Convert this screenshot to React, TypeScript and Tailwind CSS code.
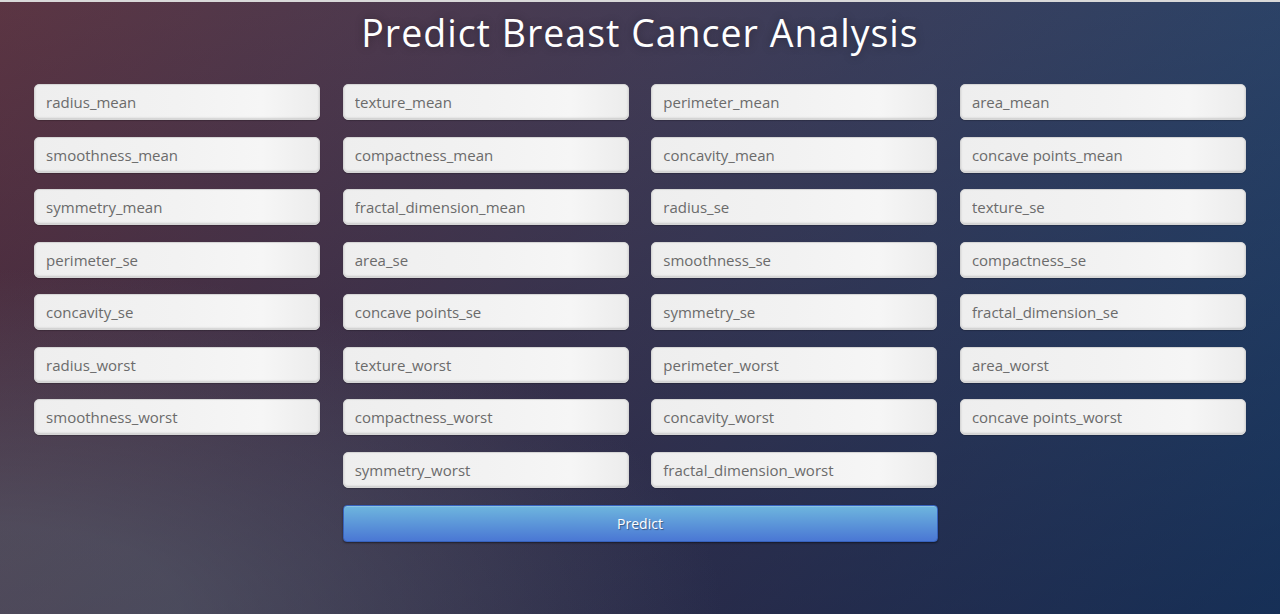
import React from 'react';

const fields = [
  'radius_mean', 'texture_mean', 'perimeter_mean', 'area_mean',
  'smoothness_mean', 'compactness_mean', 'concavity_mean', 'concave points_mean',
  'symmetry_mean', 'fractal_dimension_mean', 'radius_se', 'texture_se',
  'perimeter_se', 'area_se', 'smoothness_se', 'compactness_se',
  'concavity_se', 'concave points_se', 'symmetry_se', 'fractal_dimension_se',
  'radius_worst', 'texture_worst', 'perimeter_worst', 'area_worst',
  'smoothness_worst', 'compactness_worst', 'concavity_worst', 'concave points_worst',
  'symmetry_worst', 'fractal_dimension_worst',
];

export default function App() {
  return (
    <div
      className="min-h-screen w-full border-t-2 border-[#d9d9d9] bg-[#092756] bg-[radial-gradient(ellipse_at_0%_100%,rgba(104,128,138,.4)_10%,rgba(138,114,76,0)_40%),linear-gradient(to_bottom,rgba(57,173,219,.25)_0%,rgba(42,60,87,.4)_100%),linear-gradient(135deg,#670d10_0%,#092756_100%)]"
      style={{ fontFamily: '"Open Sans", sans-serif' }}
    >
      <div className="flex flex-col items-center">
        {/* Title */}
        <h1 className="mt-[7px] text-[37.5px] leading-[48px] tracking-[1px] text-white [text-shadow:0_0_10px_rgba(0,0,0,0.3)]">
          Predict Breast Cancer Analysis
        </h1>

        {/* Form */}
        <form className="mt-[27px] w-[1212px] flex flex-col items-center gap-[17px]">
          <div className="w-full flex flex-wrap justify-center gap-x-[22.6px] gap-y-[16.5px]">
            {fields.map((f) => (
              <input
                key={f}
                type="text"
                name={f}
                placeholder={f}
                className="w-[286px] h-[36px] px-[11px] rounded-[5px] border border-[#d6d6d6] bg-[#f1f1f1] bg-[linear-gradient(to_right,#eeeeee,#f2f2f2_50%,#f6f6f6_80%,#ececec)] text-[15px] text-[#555] placeholder:text-[#6b6b6b] shadow-[inset_0_-1px_2px_rgba(0,0,0,0.15),0_1px_1px_rgba(0,0,0,0.2)] outline-none"
              />
            ))}
          </div>
          <button
            type="submit"
            className="w-[595px] h-[37px] rounded-[4px] border border-[#3762bc] bg-[linear-gradient(to_bottom,#6eb6de,#4a77d4)] text-[14px] text-white [text-shadow:1px_1px_1px_rgba(0,0,0,0.4)] shadow-[inset_0_1px_0_rgba(255,255,255,0.2),0_1px_2px_rgba(0,0,0,0.5)]"
          >
            Predict
          </button>
        </form>
      </div>
    </div>
  );
}
